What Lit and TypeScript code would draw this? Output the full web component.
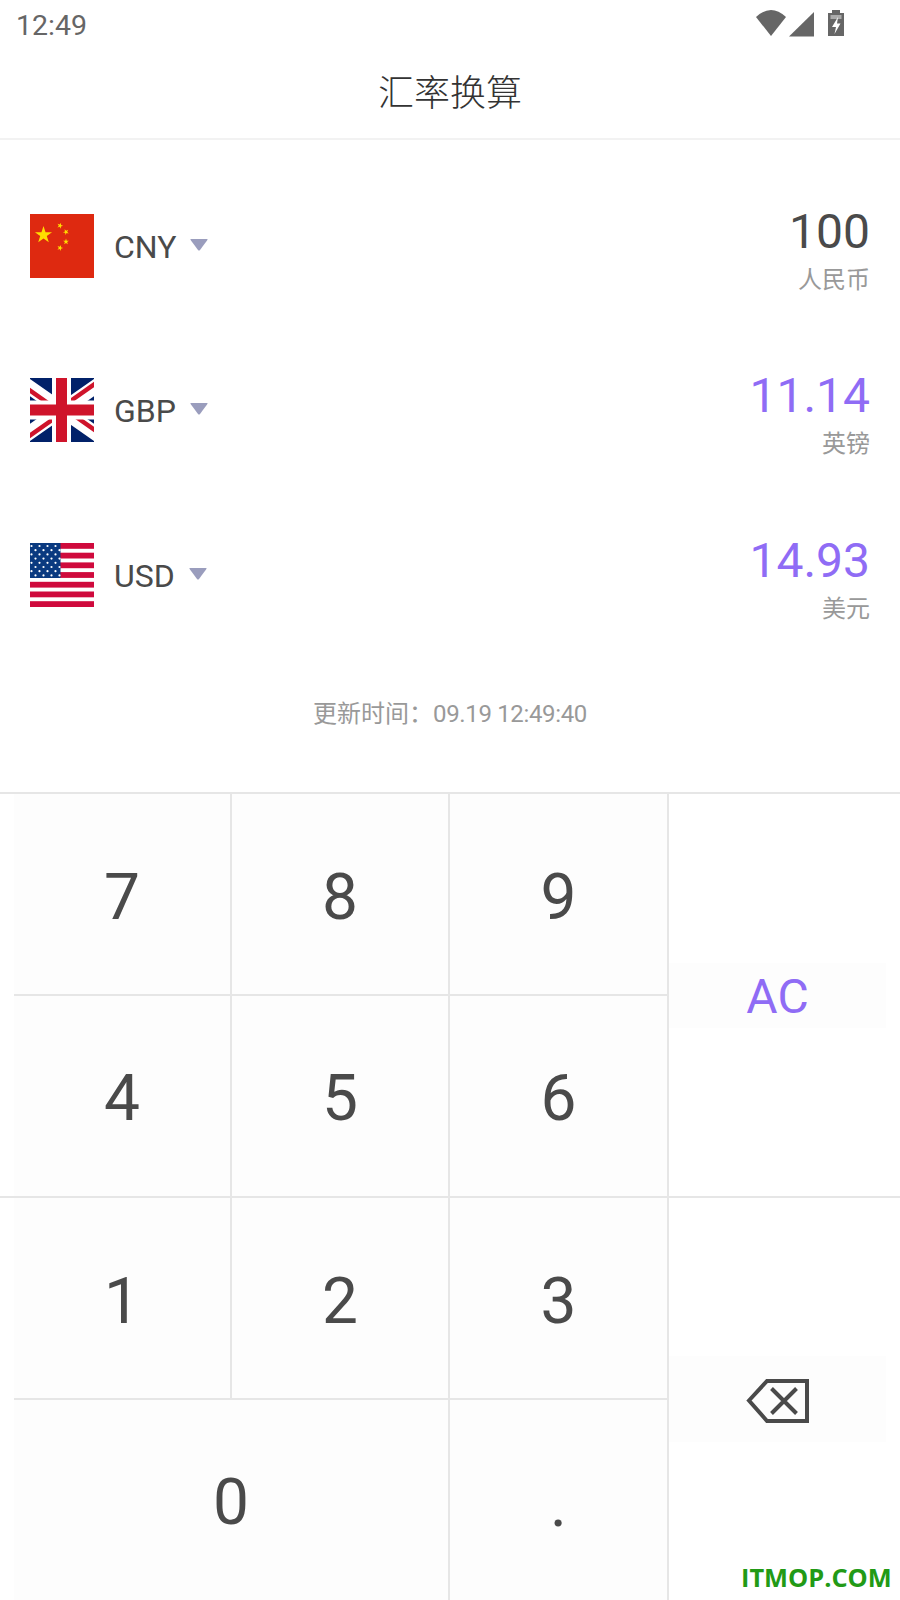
import { LitElement, html, css, svg } from "lit";
import { customElement } from "lit/decorators.js";

const star = (cx: number, cy: number, r: number, rot = 0) => {
  const pts: string[] = [];
  for (let i = 0; i < 10; i++) {
    const rad = i % 2 === 0 ? r : r * 0.382;
    const a = ((-90 + rot + i * 36) * Math.PI) / 180;
    pts.push(`${(cx + rad * Math.cos(a)).toFixed(2)},${(cy + rad * Math.sin(a)).toFixed(2)}`);
  }
  return svg`<polygon points=${pts.join(" ")} fill="#ffde00"/>`;
};

const cnFlag = html`<svg class="flag" viewBox="0 0 64 64">
  <rect width="64" height="64" fill="#de2910"/>
  ${star(13.5, 21, 9)}${star(30, 11.7, 3.1, 20)}${star(36, 18, 3.1, 45)}${star(36, 27.7, 3.1, 0)}${star(30, 34, 3.1, 20)}
</svg>`;

const ukFlag = html`<svg class="flag" viewBox="0 0 64 64">
  <rect width="64" height="64" fill="#012169"/>
  <path d="M-32 -12.800L96 76.800M96 -12.800L-32 76.800" stroke="#fff" stroke-width="14"/>
  <path d="M32 35L-32 -9.800M32 29L96 73.800M32 29L96 -15.800M32 35L-32 79.800" stroke="#cf142b" stroke-width="4.5"/>
  <path d="M31.5 0V64M0 32H64" stroke="#fff" stroke-width="19"/>
  <path d="M31.5 0V64M0 32H64" stroke="#cf142b" stroke-width="11"/>
</svg>`;

const usFlag = () => {
  const stripes = [];
  for (let i = 0; i < 7; i++) {
    stripes.push(svg`<rect x="0" y=${i * 9.7} width="64" height="5.8" fill="#cf0a3c"/>`);
  }
  const stars = [];
  for (let r = 0; r < 8; r++) {
    for (let c = 0; c < 4; c++) {
      stars.push(svg`<circle cx=${1.5 + (r % 2 === 0 ? 0 : 4) + c * 8} cy=${3 + r * 4.2} r="1.1" fill="#fff"/>`);
    }
  }
  return html`<svg class="flag" viewBox="0 0 64 64">
    <rect width="64" height="64" fill="#fff"/>
    ${stripes}
    <rect width="30.5" height="35" fill="#0a3a80"/>
    ${stars}
  </svg>`;
};

const rows = [
  { code: "CNY", flag: cnFlag, value: "100", name: "人民币", active: false },
  { code: "GBP", flag: ukFlag, value: "11.14", name: "英镑", active: true },
  { code: "USD", flag: usFlag(), value: "14.93", name: "美元", active: true },
];

@customElement("app-root")
export class AppRoot extends LitElement {
  static styles = css`
    :host {
      display: block;
      position: relative;
      width: 900px;
      height: 1600px;
      overflow: hidden;
      background: #fff;
      font-family: Roboto, "Noto Sans CJK SC", sans-serif;
    }
    .status {
      height: 50px;
      display: flex;
      align-items: center;
      justify-content: space-between;
      padding: 0 45px 0 16px;
      box-sizing: border-box;
    }
    .time {
      font-size: 28.5px;
      color: #666;
      line-height: 50px;
      position: relative;
      top: 1px;
    }
    .icons {
      display: block;
      width: 110px;
      height: 45px;
      margin-top: -5px;
    }
    .title {
      height: 88px;
      line-height: 89px;
      text-align: center;
      font-size: 36px;
      font-weight: 300;
      color: #333;
      border-bottom: 2px solid #f2f2f2;
      box-sizing: content-box;
    }
    .rows {
      padding-top: 74px;
      display: flex;
      flex-direction: column;
      gap: 100px;
    }
    .row {
      height: 64.3px;
      display: flex;
      align-items: center;
      padding: 0 30px;
    }
    .flag {
      width: 64px;
      height: 64px;
      flex: none;
      display: block;
    }
    .code {
      margin-left: 20px;
      font-size: 32px;
      color: #4a4a4a;
      line-height: 64px;
      position: relative;
      top: 1px;
    }
    .tri {
      margin-left: 14px;
      width: 18px;
      height: 12px;
      flex: none;
      display: block;
      position: relative;
      top: -1px;
    }
    .amount {
      margin-left: auto;
      display: flex;
      flex-direction: column;
      align-items: flex-end;
      position: relative;
      top: 4px;
    }
    .val {
      font-size: 48px;
      line-height: 56px;
      color: #4a4a4a;
    }
    .val.on {
      color: #8f6cf5;
    }
    .name {
      font-size: 24px;
      line-height: 32px;
      color: #999;
      margin-top: 4px;
    }
    .updated {
      margin-top: 90px;
      height: 34px;
      line-height: 34px;
      text-align: center;
      font-size: 24px;
      color: #999;
    }
    .stamp {
      letter-spacing: -0.35px;
    }
    .keypad {
      position: absolute;
      left: 0;
      right: 0;
      top: 792px;
    }
    .group {
      border-top: 2px solid #e6e6e6;
      height: 402px;
      box-sizing: content-box;
      padding: 0 14px;
      display: grid;
      grid-template-columns: 218px 218px 219px 217px;
      grid-template-rows: 202px 200px;
    }
    .group + .group {
      height: 400px;
    }
    .key {
      display: flex;
      align-items: center;
      justify-content: center;
      background: #fdfdfd;
      font-size: 64px;
      color: #4a4a4a;
      border-right: 2px solid #e6e6e6;
      border-bottom: 2px solid #e6e6e6;
      box-sizing: border-box;
      padding-top: 6px;
    }
    .key.wide {
      grid-column: span 2;
    }
    .key.last {
      border-bottom: none;
      padding-top: 4px;
    }
    .key.dot {
      padding-top: 8px;
    }
    .side {
      grid-column: 4;
      grid-row: 1 / span 2;
      display: flex;
      align-items: center;
    }
    .side > div {
      width: 100%;
      display: flex;
      align-items: center;
      justify-content: center;
      background: #fdfdfd;
    }
    .ac {
      height: 65px;
      font-size: 48px;
      color: #8f6cf5;
      padding-top: 2px;
      box-sizing: border-box;
    }
    .back {
      height: 86px;
      padding-top: 4px;
      box-sizing: border-box;
    }
    .back svg {
      display: block;
      width: 64px;
      height: 46px;
    }
    .side.second {
      align-items: flex-start;
      padding-top: 158px;
    }
    .mark {
      position: absolute;
      left: 741px;
      top: 1560px;
      font-family: "Open Sans", sans-serif;
      font-weight: 700;
      font-size: 25.4px;
      line-height: 34px;
      color: #229a16;
    }
  `;

  render() {
    return html`
      <div class="status">
        <span class="time">12:49</span>
        <svg class="icons" viewBox="0 0 110 45">
          <path d="M11 17Q26 3 41 17L26 36Z" fill="#666"/>
          <path d="M44 36.500L69 12V36.500Z" fill="#666"/>
          <path d="M83 13H87V10H95V13H99V36H83Z" fill="#666"/>
          <path d="M85.500 15H96.500V19H85.500Z" fill="#aaa"/>
          <path d="M93 17L87 27H91L89.500 34L95.500 23.500H92Z" fill="#fff"/>
        </svg>
      </div>
      <div class="title">汇率换算</div>
      <div class="rows">
        ${rows.map(
          (r) => html`<div class="row">
            ${r.flag}
            <span class="code">${r.code}</span>
            <svg class="tri" viewBox="0 0 18 12"><path d="M1 0H17Q18 0 17.4 1L10 11Q9 12 8 11L.6 1Q0 0 1 0Z" fill="#9a9dbd"/></svg>
            <div class="amount">
              <span class="val ${r.active ? "on" : ""}">${r.value}</span>
              <span class="name">${r.name}</span>
            </div>
          </div>`
        )}
      </div>
      <div class="updated">更新时间：<span class="stamp">09.19 12:49:40</span></div>
      <div class="keypad">
        <div class="group">
          <div class="key">7</div><div class="key">8</div><div class="key">9</div>
          <div class="side"><div class="ac">AC</div></div>
          <div class="key last">4</div><div class="key last">5</div><div class="key last">6</div>
        </div>
        <div class="group">
          <div class="key">1</div><div class="key">2</div><div class="key">3</div>
          <div class="side second"><div class="back">
            <svg viewBox="0 0 64 46">
              <path d="M3 22.500L21 3H61V43H21Z" fill="none" stroke="#4a4a4a" stroke-width="4"/>
              <path d="M25.500 10.500L50.500 35.500M50.500 10.500L25.500 35.500" fill="none" stroke="#4a4a4a" stroke-width="4"/>
            </svg>
          </div></div>
          <div class="key wide last">0</div><div class="key dot last">.</div>
        </div>
      </div>
      <div class="mark">ITMOP.COM</div>
    `;
  }
}
